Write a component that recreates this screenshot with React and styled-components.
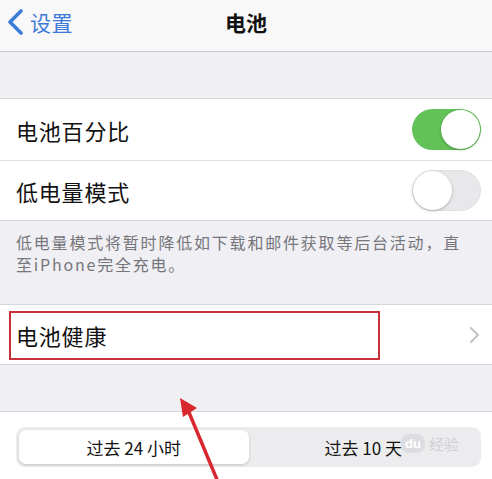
import React from 'react';
import styled, { createGlobalStyle } from 'styled-components';

const Global = createGlobalStyle`
  html, body { margin: 0; padding: 0; }
  body {
    background: #efeff4;
    font-family: "Noto Sans CJK SC", "Noto Sans", sans-serif;
    overflow: hidden;
  }
`;

const Page = styled.div`
  position: relative;
  width: 492px;
  height: 479px;
  overflow: hidden;
  background: #efeff4;
`;

const NavBar = styled.div`
  height: 51px;
  background: #f8f8f9;
  border-bottom: 1px solid #c9c9cd;
  display: grid;
  grid-template-columns: 1fr auto 1fr;
  align-items: center;
`;

const Back = styled.div`
  display: flex;
  align-items: center;
  gap: 6px;
  padding-left: 7px;
  color: #3d7bd9;
  font-size: 21px;
  letter-spacing: 0.5px;
  margin-top: -8px;
`;

const Title = styled.div`
  font-size: 21px;
  font-weight: 600;
  color: #111;
  margin-top: -7px;
`;

const Spacer = styled.div`
  height: ${p => p.h}px;
  border-bottom: 1px solid #d6d6da;
`;

const Group = styled.div`
  background: #fff;
  border-bottom: 1px solid #d6d6da;
`;

const Row = styled.div`
  height: ${p => p.h}px;
  display: flex;
  align-items: center;
  justify-content: space-between;
  padding: 0 11px 0 16px;
  position: relative;
  font-size: 22px;
  letter-spacing: 0.8px;
  color: #111;
  & + & { border-top: 1px solid #e2e2e6; }
`;

const Toggle = styled.div`
  width: 69px;
  height: 41px;
  border-radius: 21px;
  box-sizing: border-box;
  background: ${p => (p.on ? '#62c157' : '#e8e8ea')};
  border: ${p => (p.on ? 'none' : '1px solid #e0e0e2')};
  position: relative;
  & > span {
    position: absolute;
    top: ${p => (p.on ? 1 : 0)}px;
    ${p => (p.on ? 'right: 1px;' : 'left: 0;')}
    width: 39px;
    height: 39px;
    border-radius: 50%;
    background: #fff;
    box-shadow: 0 1px 3px rgba(0,0,0,0.25);
  }
`;

const Footer = styled.div`
  height: 84px;
  padding: 10px 20px 0 16px;
  box-sizing: border-box;
  font-size: 16px;
  line-height: 22px;
  letter-spacing: 1.8px;
  color: #76767b;
  border-bottom: 1px solid #d6d6da;
`;

const Highlight = styled.div`
  position: absolute;
  left: 9px;
  top: 6px;
  width: 371px;
  height: 49px;
  box-sizing: border-box;
  border: 2px solid #c8303a;
`;

const Bottom = styled.div`
  background: #fff;
  padding: 15px 11px 0 16px;
  height: 80px;
`;

const Segmented = styled.div`
  display: flex;
  height: 40px;
  border-radius: 9px;
  background: #ececee;
  padding: 3px;
  box-sizing: border-box;
  position: relative;
`;

const Segment = styled.div`
  flex: 1;
  display: flex;
  align-items: center;
  justify-content: center;
  font-size: 17px;
  color: #111;
  border-radius: 7px;
  background: ${p => (p.active ? '#fff' : 'transparent')};
  box-shadow: ${p => (p.active ? '0 1px 3px rgba(0,0,0,0.18)' : 'none')};
`;

const Watermark = styled.div`
  position: absolute;
  right: 22px;
  top: 6px;
  display: flex;
  align-items: center;
  gap: 4px;
  font-size: 15px;
  color: rgba(200, 200, 205, 0.8);
  pointer-events: none;
  & > b {
    font-family: "Liberation Sans", sans-serif;
    font-size: 13px;
    padding: 2px 4px;
    border-radius: 8px;
    background: rgba(215, 215, 220, 0.7);
    color: #fff;
  }
`;

const Arrow = styled.svg`
  position: absolute;
  left: 0;
  top: 0;
  pointer-events: none;
`;

export default function App() {
  return (
    <Page>
      <Global />
      <NavBar>
        <Back>
          <svg width="17" height="26" viewBox="0 0 17 26">
            <path d="M14 2 L3 13 L14 24" fill="none" stroke="#3d7bd9" strokeWidth="3.6" strokeLinecap="round" strokeLinejoin="round" />
          </svg>
          设置
        </Back>
        <Title>电池</Title>
        <div />
      </NavBar>
      <Spacer h={46} />
      <Group>
        <Row h={61}>
          电池百分比
          <Toggle on><span /></Toggle>
        </Row>
        <Row h={59}>
          低电量模式
          <Toggle><span /></Toggle>
        </Row>
      </Group>
      <Footer>低电量模式将暂时降低如下载和邮件获取等后台活动，直至iPhone完全充电。</Footer>
      <Group>
        <Row h={59}>
          电池健康
          <svg width="12" height="18" viewBox="0 0 12 18">
            <path d="M2 2 L9 9 L2 16" fill="none" stroke="#c4c4c8" strokeWidth="2.2" strokeLinecap="round" strokeLinejoin="round" />
          </svg>
          <Highlight />
        </Row>
      </Group>
      <Spacer h={46} />
      <Bottom>
        <Segmented>
          <Segment active>过去 24 小时</Segment>
          <Segment>过去 10 天</Segment>
          <Watermark><b>du</b>经验</Watermark>
        </Segmented>
      </Bottom>
      <Arrow width="492" height="479" viewBox="0 0 492 479">
        <line x1="218" y1="482" x2="188" y2="410" stroke="#d8272e" strokeWidth="3.5" />
        <polygon points="180,398 197,408 183,417" fill="#d8272e" />
      </Arrow>
    </Page>
  );
}
